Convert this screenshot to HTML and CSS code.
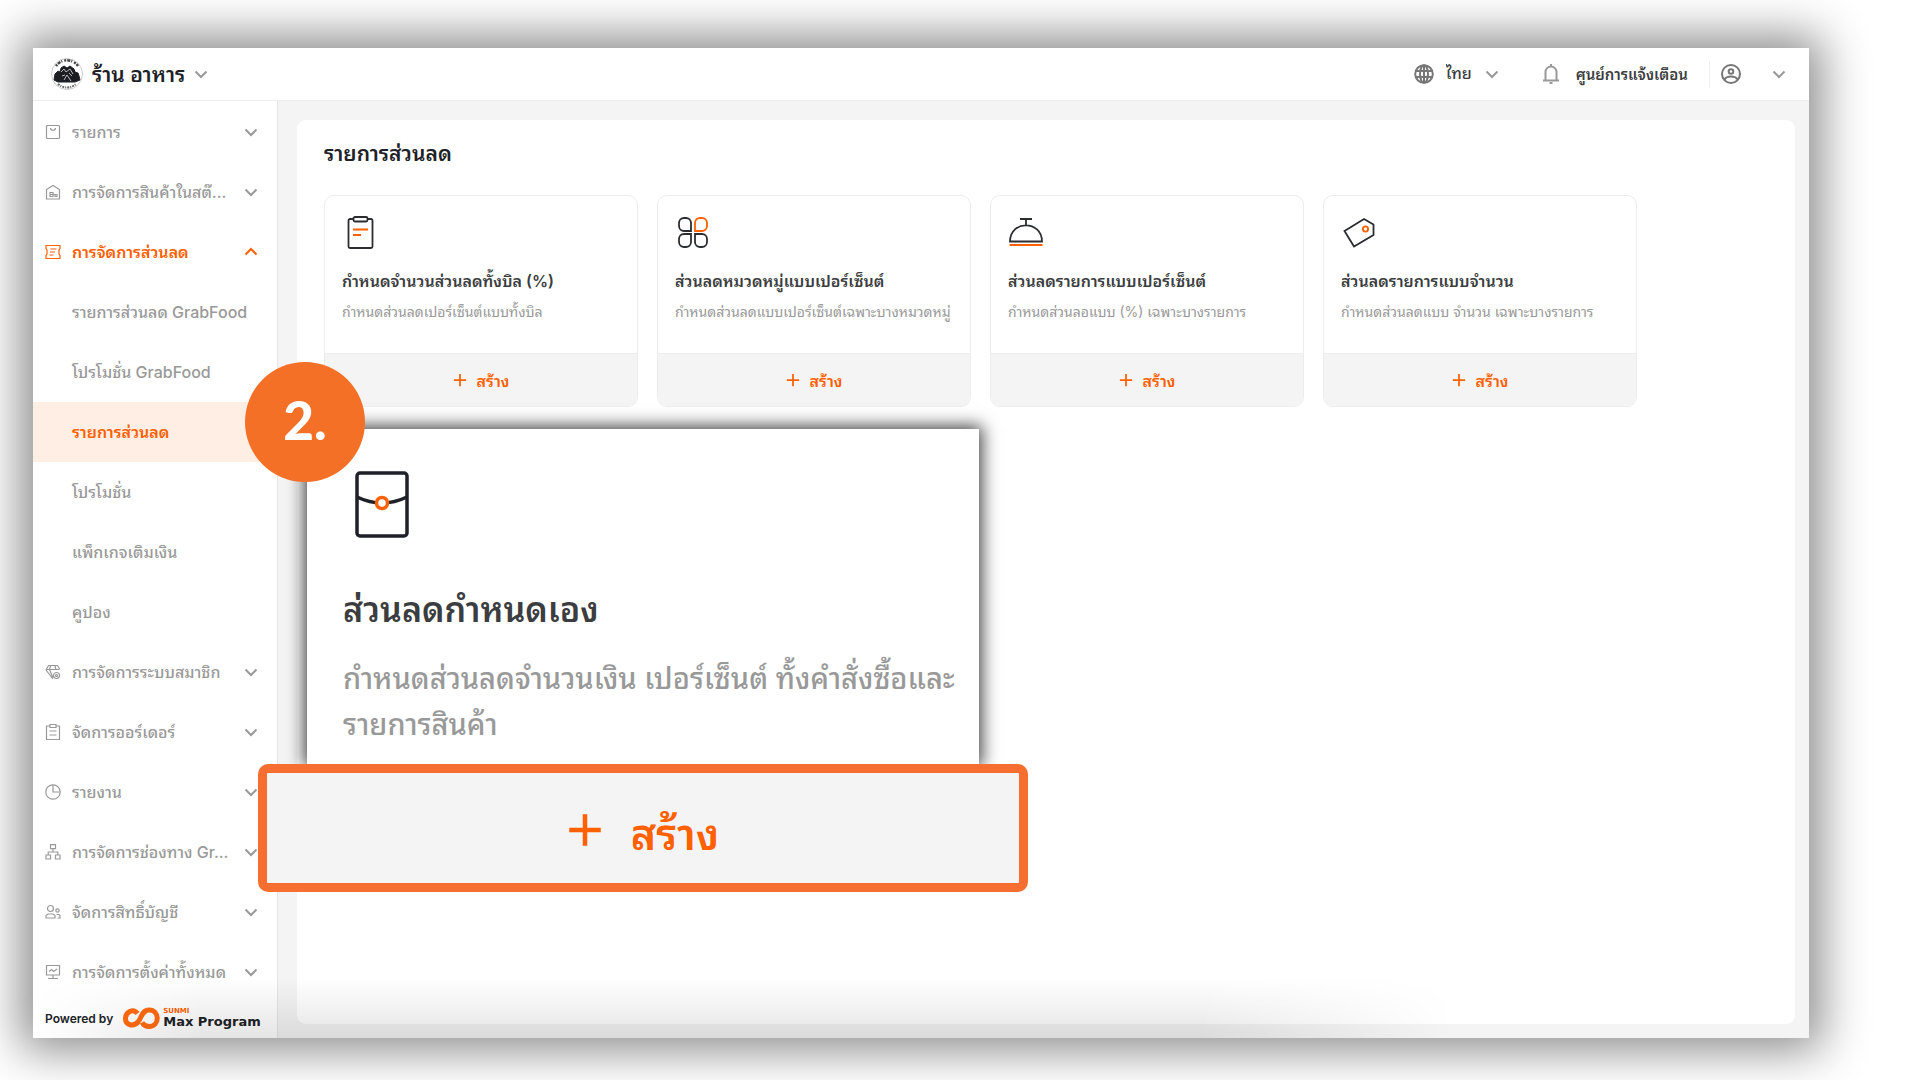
FILE: index.html
```html
<!DOCTYPE html>
<html lang="th">
<head>
  <meta charset="UTF-8">
  <meta name="viewport" content="width=device-width, initial-scale=1">
  <title>รายการส่วนลด</title>
  <link rel="stylesheet" href="styles.css">
</head>
<body>
  <!-- shared icons -->
  <svg class="sprite" aria-hidden="true">
    <symbol id="chevron" viewBox="0 0 14 14"><path d="M1.500 4.500L7 10l5.500-5.500"/></symbol>
    <symbol id="plus" viewBox="0 0 16 16"><path d="M8 1v14M1 8h14"/></symbol>
  </svg>

  <div class="window">
    <header class="topbar">
      <button class="shop" type="button">
        <svg class="shop-logo" viewBox="0 0 32 32">
          <circle cx="16" cy="16" r="15.5" fill="#fff" stroke="#ccc"/>
          <path d="M5 8a13.500 13.500 0 0 1 22 0" fill="none" stroke="#444" stroke-width="2.500" stroke-dasharray="2 1 3 1 1 2"/>
          <path d="M7 26a13.500 13.500 0 0 0 18 0" fill="none" stroke="#666" stroke-width="2" stroke-dasharray="2 1 1 1"/>
          <path d="M3 22l1-6 3-3 2 1 1-4 3-2 3 2 3-2 4 3 1 3 3 1 1 3 1 4-5 2H7z" fill="#1b1d22"/>
          <path d="M10 14l3-3 2 3 4-3 3 5M13 22l3-5 4 6M11 18l3-1M18 15l3 3" fill="none" stroke="#bbb"/>
        </svg>
        <span>ร้าน อาหาร</span>
        <svg class="chevron"><use href="#chevron"/></svg>
      </button>

      <div class="tools">
        <svg class="tool-icon globe" viewBox="0 0 20 20"><circle cx="10" cy="10" r="8.800"/><ellipse cx="10" cy="10" rx="4" ry="8.800"/><path d="M10 1.200v17.600M2 7h16M2 13h16"/></svg>
        <label class="lang">
          <select aria-label="ภาษา"><option>ไทย</option></select>
          <svg class="chevron"><use href="#chevron"/></svg>
        </label>
        <button class="notify" type="button">
          <svg class="tool-icon bell" viewBox="0 0 20 20"><path d="M10 0v2M2 16.500h16M4.500 16.500V8a5.500 5.500 0 0 1 11 0v8.500M8.500 19h3"/></svg>
          <span>ศูนย์การแจ้งเตือน</span>
        </button>
        <button class="account" type="button" aria-label="บัญชี">
          <svg class="tool-icon" viewBox="0 0 20 20"><circle cx="10" cy="10" r="9"/><circle cx="10" cy="7.500" r="2.300"/><path d="M3.500 15.500c2-4 11-4 13 0"/></svg>
          <svg class="chevron"><use href="#chevron"/></svg>
        </button>
      </div>
    </header>

    <div class="layout">
      <aside class="sidebar">
        <nav class="menu">
          <button class="item" type="button">
            <svg class="item-icon" viewBox="0 0 16 16"><rect x="1.500" y="1.500" width="13" height="13" rx="1"/><path d="M5.500 4c0 3 5 3 5 0"/></svg>
            <span>รายการ</span><svg class="chevron"><use href="#chevron"/></svg>
          </button>
          <button class="item" type="button">
            <svg class="item-icon" viewBox="0 0 16 16"><path d="M1.500 15V5.500L8 1.500l6.500 4V15zM5 8.500h3v4H5zM5 10.500h6M10 10.500v2h2v-2z"/></svg>
            <span>การจัดการสินค้าในสต๊...</span><svg class="chevron"><use href="#chevron"/></svg>
          </button>
          <button class="item open" type="button">
            <svg class="item-icon" viewBox="0 0 16 16"><path d="M1 1.500h14v3l-1 1.500v4l1 1.500v3H1v-3L2 10V6L1 4.500zM5.500 5h6M5 8h5M4.500 11h4"/></svg>
            <span>การจัดการส่วนลด</span><svg class="chevron"><use href="#chevron"/></svg>
          </button>
          <a class="item sub" href="#">รายการส่วนลด GrabFood</a>
          <a class="item sub" href="#">โปรโมชั่น GrabFood</a>
          <a class="item sub active" href="#">รายการส่วนลด</a>
          <a class="item sub" href="#">โปรโมชั่น</a>
          <a class="item sub" href="#">แพ็กเกจเติมเงิน</a>
          <a class="item sub" href="#">คูปอง</a>
          <button class="item" type="button">
            <svg class="item-icon" viewBox="0 0 16 16"><path d="M8 15L1 6l2.500-4.500h9L15 5.500M1 5.500h13M5.500 2L4.500 5.500 8 14M10 2l1 3.500"/><circle cx="11.500" cy="11.500" r="3"/><circle cx="11.500" cy="11.500" r="1"/></svg>
            <span>การจัดการระบบสมาชิก</span><svg class="chevron"><use href="#chevron"/></svg>
          </button>
          <button class="item" type="button">
            <svg class="item-icon" viewBox="0 0 16 16"><path d="M5 2H1.500v13.500h13V2H11M5 .5h6v3H5zM4.500 7h7M4.500 11h7"/></svg>
            <span>จัดการออร์เดอร์</span><svg class="chevron"><use href="#chevron"/></svg>
          </button>
          <button class="item" type="button">
            <svg class="item-icon" viewBox="0 0 16 16"><circle cx="8" cy="8" r="7.200"/><path d="M8 1v7h7"/></svg>
            <span>รายงาน</span><svg class="chevron"><use href="#chevron"/></svg>
          </button>
          <button class="item" type="button">
            <svg class="item-icon" viewBox="0 0 16 16"><path d="M5.500.7h5v4h-5zM1 11h4.500v4H1zM10.500 11H15v4h-4.500zM8 5v3M3.200 11V8h9.600v3"/></svg>
            <span>การจัดการช่องทาง Gr...</span><svg class="chevron"><use href="#chevron"/></svg>
          </button>
          <button class="item" type="button">
            <svg class="item-icon" viewBox="0 0 16 16"><circle cx="5.500" cy="4.500" r="3"/><path d="M1 14v-2.500L3 10h5l2 1.500V14z"/><circle cx="12.500" cy="6.500" r="1.700"/><path d="M11.500 10.500H14l1 1V14h-2.500"/></svg>
            <span>จัดการสิทธิ์บัญชี</span><svg class="chevron"><use href="#chevron"/></svg>
          </button>
          <button class="item" type="button">
            <svg class="item-icon" viewBox="0 0 16 16"><path d="M1.500 1.500h13v9.500h-13zM8 11v3.500M3 14.500h10M4 7.500l2.500-2 2 2 3.500-2.500"/></svg>
            <span>การจัดการตั้งค่าทั้งหมด</span><svg class="chevron"><use href="#chevron"/></svg>
          </button>
        </nav>
        <div class="powered">
          <span>Powered by</span>
          <svg class="brand-mark" viewBox="0 0 40 24"><path d="M15.500 7.500C11 2 3.500 6 3.500 12.500c0 7 8 8.500 12.500 3.500 3.500-4 4-12 11-12 11 0 11 16.500 0 16.500-3.500 0-5.500-1.500-7-4"/></svg>
          <div class="brand">
            <span class="brand-top">SUNMI</span>
            <span class="brand-name">Max Program</span>
          </div>
        </div>
      </aside>

      <main class="content">
        <section class="panel">
          <h1>รายการส่วนลด</h1>
          <div class="cards">
            <article class="card">
              <div class="card-body">
                <svg class="card-icon" viewBox="0 0 36 36"><path d="M11 5H8a1.500 1.500 0 0 0-1.500 1.500v26A1.500 1.500 0 0 0 8 34h21a1.500 1.500 0 0 0 1.500-1.500v-26A1.500 1.500 0 0 0 29 5h-3"/><rect x="11.500" y="3" width="14" height="4.500" rx="1.500"/><path class="accent" d="M11 15.500h15M11 21h8"/></svg>
                <h2>กำหนดจำนวนส่วนลดทั้งบิล (%)</h2>
                <p>กำหนดส่วนลดเปอร์เซ็นต์แบบทั้งบิล</p>
              </div>
              <button class="create" type="button"><svg><use href="#plus"/></svg>สร้าง</button>
            </article>
            <article class="card">
              <div class="card-body">
                <svg class="card-icon" viewBox="0 0 36 36"><path d="M16 17H9a5 5 0 0 1-5-5V9a5 5 0 0 1 5-5h2a5 5 0 0 1 5 5z"/><path d="M16 20v8a5 5 0 0 1-5 5H9a5 5 0 0 1-5-5v-3a5 5 0 0 1 5-5zM20 20v8a5 5 0 0 0 5 5h2a5 5 0 0 0 5-5v-3a5 5 0 0 0-5-5z"/><path class="accent" d="M20 17V9a5 5 0 0 1 5-5h2a5 5 0 0 1 5 5v3a5 5 0 0 1-5 5z"/></svg>
                <h2>ส่วนลดหมวดหมู่แบบเปอร์เซ็นต์</h2>
                <p>กำหนดส่วนลดแบบเปอร์เซ็นต์เฉพาะบางหมวดหมู่</p>
              </div>
              <button class="create" type="button"><svg><use href="#plus"/></svg>สร้าง</button>
            </article>
            <article class="card">
              <div class="card-body">
                <svg class="card-icon" viewBox="0 0 36 36"><path d="M12 5h12M18 5v6M2 27.500C2 6 34 6 34 27.500z"/><path class="accent" d="M1.500 31h33"/></svg>
                <h2>ส่วนลดรายการแบบเปอร์เซ็นต์</h2>
                <p>กำหนดส่วนลอแบบ (%) เฉพาะบางรายการ</p>
              </div>
              <button class="create" type="button"><svg><use href="#plus"/></svg>สร้าง</button>
            </article>
            <article class="card">
              <div class="card-body">
                <svg class="card-icon" viewBox="0 0 36 36"><path d="M3.500 17L23 5l9.500 5.500V21L13 32.500z"/><circle class="accent" cx="24.500" cy="15" r="2.600"/></svg>
                <h2>ส่วนลดรายการแบบจำนวน</h2>
                <p>กำหนดส่วนลดแบบ จำนวน เฉพาะบางรายการ</p>
              </div>
              <button class="create" type="button"><svg><use href="#plus"/></svg>สร้าง</button>
            </article>
          </div>
        </section>
      </main>
    </div>

    <!-- enlarged card for step 2 -->
    <div class="callout">
      <article class="zoom-card">
        <svg class="zoom-icon" viewBox="0 0 56 68"><rect x="2" y="2" width="50" height="63" rx="3"/><path d="M2 26q25 12 50 0"/><circle class="accent" cx="27" cy="32" r="5.500" fill="#fff"/></svg>
        <h2>ส่วนลดกำหนดเอง</h2>
        <p>กำหนดส่วนลดจำนวนเงิน เปอร์เซ็นต์ ทั้งคำสั่งซื้อและ<br>รายการสินค้า</p>
      </article>
      <button class="create create-big" type="button"><svg><use href="#plus"/></svg>สร้าง</button>
      <div class="step">2.</div>
    </div>
  </div>
</body>
</html>
```
FILE: styles.css
```css
* {
  box-sizing: border-box;
}
body {
  margin: 0;
  padding: 48px 111px 42px 33px;
  background: #fff;
  font-family: Inter, "Noto Sans Thai Looped", "Noto Looped Thai", Loma, Garuda, "Noto Sans", sans-serif;
  font-size: 16px;
  color: #3b3d40;
}
button, select {
  font: inherit;
  color: inherit;
  background: none;
  border: 0;
  padding: 0;
}
h1, h2, p {
  margin: 0;
}
svg {
  display: block;
  flex: none;
  fill: none;
  stroke: currentColor;
}
.sprite {
  position: absolute;
  width: 0;
  height: 0;
}
.chevron {
  width: 14px;
  height: 14px;
  color: #999;
  stroke-width: 2;
}
.window {
  position: relative;
  display: flex;
  flex-direction: column;
  min-height: calc(100vh - 90px);
  background: #f4f4f4;
  box-shadow: 0 0 44px 12px rgba(0,0,0,0.46);
}
/* soft shade along the bottom edge */
.window::after {
  content: "";
  position: absolute;
  left: 0;
  bottom: 0;
  width: 80%;
  height: 60px;
  background: linear-gradient(transparent, rgba(0,0,0,0.1));
  mask-image: linear-gradient(to right, transparent, #000 12%, #000 82%, transparent);
  pointer-events: none;
}

/* top bar */
.topbar {
  display: flex;
  justify-content: space-between;
  align-items: center;
  height: 53px;
  padding: 0 23px 0 18px;
  background: #fff;
  border-bottom: 1px solid #eee;
}
.topbar span, .topbar select {
  padding-bottom: 3px;
}
.shop {
  display: flex;
  align-items: center;
  gap: 9px;
  font-size: 21px;
  font-weight: 600;
  color: #202227;
}
.shop-logo {
  width: 32px;
  height: 32px;
}
.tools {
  display: flex;
  align-items: center;
}
.tool-icon {
  width: 20px;
  height: 20px;
  stroke-width: 2;
  color: #777;
}
.bell {
  color: #999;
}
.lang {
  display: flex;
  align-items: center;
  gap: 12px;
  margin: 0 42px 0 12px;
  font-weight: 500;
}
.lang select {
  appearance: none;
}
.notify {
  display: flex;
  align-items: center;
  gap: 15px;
  padding-right: 21px;
  border-right: 1px solid #eee;
  font-size: 15px;
  font-weight: 600;
}
.account {
  display: flex;
  align-items: center;
  gap: 31px;
  margin-left: 11px;
}

/* side menu */
.layout {
  display: flex;
  flex: 1;
}
.sidebar {
  display: flex;
  flex-direction: column;
  flex: none;
  width: 245px;
  background: #fff;
  border-right: 1px solid #e6e6e6;
}
.menu {
  padding-top: 1px;
}
.item {
  display: flex;
  align-items: center;
  width: 100%;
  height: 60px;
  padding: 0 19px 0 12px;
  font-weight: 500;
  color: #999;
  text-align: left;
  text-decoration: none;
  white-space: nowrap;
}
.item span {
  flex: 1;
  margin-left: 11px;
  padding-bottom: 3px;
}
.item-icon {
  width: 16px;
  height: 16px;
  stroke-width: 1.2;
}
.sub {
  padding-left: 39px;
  padding-bottom: 3px;
}
.open, .open .chevron, .active {
  color: #ff6000;
  font-weight: 600;
}
.open .chevron {
  transform: rotate(180deg);
}
.active {
  background: #ffeee4;
}
.powered {
  display: flex;
  align-items: center;
  flex: 1;
  padding: 0 12px 4px;
  font-size: 12px;
  font-weight: 600;
  color: #202227;
}
.brand-mark {
  width: 40px;
  height: 24px;
  margin-left: 9px;
  color: #ff6b0f;
  stroke-width: 5;
}
.brand {
  display: flex;
  flex-direction: column;
  margin-left: 1px;
  font-family: "DejaVu Sans", sans-serif;
  font-weight: 700;
}
.brand-top {
  font-size: 7px;
  line-height: 7px;
  color: #ff6000;
}
.brand-name {
  font-size: 13px;
  line-height: 14px;
  white-space: nowrap;
}

/* main panel */
.content {
  display: flex;
  flex: 1;
  padding: 19px 14px 14px 19px;
}
.panel {
  flex: 1;
  padding: 20px 27px;
  background: #fff;
  border-radius: 9px;
}
.panel h1 {
  margin-bottom: 27px;
  font-size: 21px;
  font-weight: 600;
  line-height: 28px;
  color: #202227;
}
.cards {
  display: grid;
  grid-template-columns: repeat(auto-fill, 314px);
  gap: 19px;
}
.card {
  border: 1px solid #ededed;
  border-radius: 10px;
  overflow: hidden;
}
.card-body {
  height: 157px;
  padding: 18px 17px;
}
.card-icon {
  width: 36px;
  height: 36px;
  color: #2b2d31;
  stroke-width: 1.8;
}
.accent {
  stroke: #ff6000;
}
.card h2 {
  margin-top: 19px;
  font-size: 16px;
  font-weight: 600;
  line-height: 24px;
  white-space: nowrap;
}
.card p {
  margin-top: 7px;
  font-size: 14px;
  line-height: 24px;
  color: #999;
  white-space: nowrap;
}
.create {
  display: flex;
  align-items: center;
  justify-content: center;
  gap: 10px;
  width: 100%;
  height: 53px;
  background: #f4f4f4;
  border-top: 1px solid #ededed;
  font-size: 16px;
  font-weight: 600;
  color: #ff6000;
}
.create svg {
  width: 14px;
  height: 14px;
  stroke-width: 2;
}

/* step callout, lies over the page */
.callout {
  position: absolute;
  z-index: 1;
  left: 225px;
  top: 381px;
  width: 770px;
}
.zoom-card {
  margin: 0 49px;
  height: 335px;
  padding: 42px 0 0 36px;
  background: #fff;
  box-shadow: 0 0 16px 3px rgba(0,0,0,0.75);
}
.zoom-icon {
  width: 56px;
  height: 68px;
  margin-left: 12px;
  color: #1e2127;
  stroke-width: 3.5;
}
.zoom-card h2 {
  margin-top: 48px;
  font-size: 34px;
  font-weight: 600;
  line-height: 46px;
}
.zoom-card p {
  margin-top: 23px;
  font-size: 29px;
  font-weight: 500;
  line-height: 46px;
  color: #999;
}
.create-big {
  position: relative;
  height: 128px;
  gap: 28px;
  padding-top: 4px;
  border: 9px solid #f66f31;
  border-radius: 10px;
  font-size: 43px;
}
.create-big svg {
  width: 36px;
  height: 36px;
}
.step {
  position: absolute;
  left: -13px;
  top: -67px;
  width: 120px;
  height: 120px;
  border-radius: 50%;
  background: #f37026;
  font: 900 53px/116px Lato, sans-serif;
  color: #fff;
  text-align: center;
}
```
